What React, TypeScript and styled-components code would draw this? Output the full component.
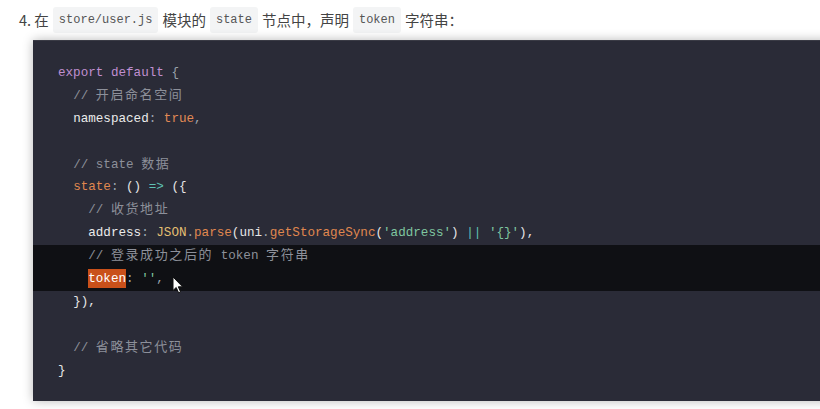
import React from "react";
import styled, { createGlobalStyle } from "styled-components";

const Global = createGlobalStyle`
  html, body { margin: 0; padding: 0; background: #ffffff; }
  body { width: 820px; height: 409px; overflow: hidden; }
`;

const Page = styled.div`
  position: relative;
  width: 820px;
  height: 409px;
  overflow: hidden;
  background: #fff;
`;

const Step = styled.p`
  margin: 0;
  padding: 5px 0 0 19px;
  height: 35px;
  box-sizing: border-box;
  display: flex;
  align-items: center;
  font-family: "Noto Sans CJK SC", "Noto Sans", sans-serif;
  font-size: 14.5px;
  color: #444;
  line-height: 22px;
  white-space: pre;
`;

const InlineCode = styled.code`
  font-family: "Liberation Mono", "DejaVu Sans Mono", monospace;
  font-size: 12px;
  color: #555;
  background: #f3f4f5;
  border-radius: 3px;
  padding: 2px 6px;
  margin: 0 4px;
`;

const Block = styled.div`
  position: relative;
  margin: 5px 0 0 33px;
  width: 800px;
  height: 361px;
  box-sizing: border-box;
  background: #2a2b37;
  padding: 21px 0 0 0;
  box-shadow: 0 0 10px rgba(0, 0, 0, 0.28);
  border-top: 1px solid #3a3b45;
`;

const Line = styled.div<{ $hl?: boolean }>`
  height: 22.9px;
  line-height: 22.9px;
  padding-left: 25px;
  background: ${(p) => (p.$hl ? "#0f1014" : "transparent")};
  font-family: "Liberation Mono", "DejaVu Sans Mono", "Noto Sans CJK SC", monospace;
  font-size: 12.6px;
  color: #e6e6e6;
  white-space: pre;
  overflow: hidden;
`;

type Kind = "kw" | "cm" | "prop" | "bool" | "punc" | "op" | "obj" | "fn" | "str" | "plain" | "mark";

const colors: Record<Kind, string> = {
  kw: "#c08fd0",
  cm: "#8d909a",
  prop: "#ececec",
  bool: "#e38a55",
  punc: "#9aa3ad",
  op: "#5fc1b5",
  obj: "#e3bf72",
  fn: "#e0884f",
  str: "#7fc6a0",
  plain: "#e6e6e6",
  mark: "#ffffff",
};

const Tok = styled.span<{ $k: Kind }>`
  color: ${(p) => colors[p.$k]};
  ${(p) =>
    p.$k === "mark"
      ? `background: #c9501a; padding: 3px 0 2px; `
      : ""}
`;

const Han = styled.span`
  font-family: "Noto Sans CJK SC", sans-serif;
  font-size: 13px;
  line-height: 1;
  letter-spacing: 1.6px;
`;

const Cursor = styled.svg`
  position: absolute;
  left: 139px;
  top: 235px;
  width: 12px;
  height: 18px;
`;

type T = [Kind, string];

const lines: { indent: number; toks: T[]; hl?: boolean }[] = [
  { indent: 0, toks: [["kw", "export default"], ["plain", " "], ["punc", "{"]] },
  { indent: 2, toks: [["cm", "// 开启命名空间"]] },
  { indent: 2, toks: [["prop", "namespaced"], ["punc", ": "], ["bool", "true"], ["punc", ","]] },
  { indent: 0, toks: [] },
  { indent: 2, toks: [["cm", "// state 数据"]] },
  {
    indent: 2,
    toks: [["fn", "state"], ["punc", ": "], ["plain", "() "], ["op", "=>"], ["plain", " ({"]],
  },
  { indent: 4, toks: [["cm", "// 收货地址"]] },
  {
    indent: 4,
    toks: [
      ["prop", "address"],
      ["punc", ": "],
      ["obj", "JSON"],
      ["punc", "."],
      ["fn", "parse"],
      ["plain", "(uni"],
      ["punc", "."],
      ["fn", "getStorageSync"],
      ["plain", "("],
      ["str", "'address'"],
      ["plain", ") "],
      ["op", "||"],
      ["plain", " "],
      ["str", "'{}'"],
      ["plain", "),"],
    ],
  },
  { indent: 4, toks: [["cm", "// 登录成功之后的 token 字符串"]], hl: true },
  {
    indent: 4,
    toks: [["mark", "token"], ["punc", ": "], ["str", "''"], ["punc", ","]],
    hl: true,
  },
  { indent: 2, toks: [["plain", "}),"]] },
  { indent: 0, toks: [] },
  { indent: 2, toks: [["cm", "// 省略其它代码"]] },
  { indent: 0, toks: [["plain", "}"]] },
];

function renderText(s: string) {
  const parts = s.split(/([\u4e00-\u9fff]+)/);
  return parts.map((p, i) =>
    /[\u4e00-\u9fff]/.test(p) ? <Han key={i}>{p}</Han> : <React.Fragment key={i}>{p}</React.Fragment>
  );
}

export default function App() {
  return (
    <Page>
      <Global />
      <Step>
        4. 在<InlineCode>store/user.js</InlineCode>模块的<InlineCode>state</InlineCode>节点中，声明<InlineCode>token</InlineCode>字符串：
      </Step>
      <Block>
        {lines.map((l, i) => (
          <Line key={i} $hl={l.hl}>
            {" ".repeat(l.indent)}
            {l.toks.map((t, j) => (
              <Tok key={j} $k={t[0]}>
                {renderText(t[1])}
              </Tok>
            ))}
          </Line>
        ))}
        <Cursor viewBox="0 0 12 18">
          <path
            d="M1 1 L1 14.5 L4.2 11.5 L6.6 16.8 L8.6 15.9 L6.3 10.8 L10.6 10.8 Z"
            fill="#ffffff"
            stroke="#111"
            strokeWidth="1"
            strokeLinejoin="round"
          />
        </Cursor>
      </Block>
    </Page>
  );
}
